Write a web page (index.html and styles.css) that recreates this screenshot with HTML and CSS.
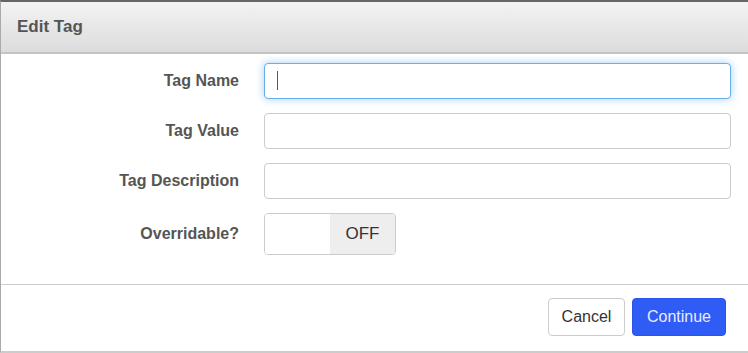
FILE: index.html
```html
<!DOCTYPE html>
<html lang="en">
<head>
  <meta charset="UTF-8" />
  <meta name="viewport" content="width=device-width, initial-scale=1.0"/>
  <title>Edit Tag</title>
  <link rel="stylesheet" href="styles.css">
</head>
<body>
  <div class="modal">
    <div class="modal-header">Edit Tag</div>

    <form class="modal-body">
      <div class="row">
        <label for="tagName">Tag Name</label>
        <div class="field">
          <input type="text" id="tagName" class="focused">
          <span class="caret"></span>
        </div>
      </div>
      <div class="row">
        <label for="tagValue">Tag Value</label>
        <div class="field"><input type="text" id="tagValue"></div>
      </div>
      <div class="row">
        <label for="tagDescription">Tag Description</label>
        <div class="field"><input type="text" id="tagDescription"></div>
      </div>
      <div class="row">
        <label>Overridable?</label>
        <div class="field">
          <div class="switch">
            <span class="switch-handle"></span>
            <span class="switch-off">OFF</span>
          </div>
        </div>
      </div>
    </form>

    <div class="modal-footer">
      <button class="btn btn-default">Cancel</button>
      <button class="btn btn-primary">Continue</button>
    </div>
  </div>
</body>
</html>
```

FILE: styles.css
```css
body {
  margin: 0;
  font-family: "Liberation Sans", Arial, sans-serif;
  font-size: 16px;
  color: #333;
  background-color: #fff;
}

.modal {
  border-top: 2px solid #666;
  border-left: 1px solid #aaa;
  border-bottom: 2px solid #ccc;
  height: 353px;
  box-sizing: border-box;
  display: flex;
  flex-direction: column;
}

.modal-header {
  height: 50px;
  padding-left: 16px;
  display: flex;
  align-items: center;
  font-size: 17px;
  font-weight: bold;
  color: #555;
  background: linear-gradient(to bottom, #f3f3f3, #dcdcdc);
  border-bottom: 2px solid #c4c4c4;
  flex-shrink: 0;
}

.modal-body {
  margin: 0;
  padding: 9px 17px 0 0;
  flex: 1;
}

.row {
  display: flex;
  align-items: center;
  margin-bottom: 14px;
}

.row:last-child {
  margin-bottom: 0;
}

.row label {
  flex: 0 0 263px;
  text-align: right;
  font-weight: bold;
  color: #555;
  padding-right: 25px;
  box-sizing: border-box;
}

.field {
  flex: 1;
  position: relative;
}

input[type="text"] {
  display: block;
  width: 100%;
  height: 36px;
  box-sizing: border-box;
  border: 1px solid #ccc;
  border-radius: 4px;
  padding: 6px 12px;
  font-family: inherit;
  font-size: 16px;
  color: #555;
  outline: none;
}

input.focused,
input[type="text"]:focus {
  border-color: #66afe9;
  box-shadow: 0 0 8px rgba(102, 175, 233, 0.6);
}

.caret {
  position: absolute;
  left: 13px;
  top: 8px;
  width: 1px;
  height: 19px;
  background-color: #555;
}

.switch {
  display: flex;
  width: 132px;
  height: 42px;
  box-sizing: border-box;
  border: 1px solid #ccc;
  border-radius: 4px;
  overflow: hidden;
}

.switch-handle {
  width: 65px;
  background-color: #fff;
}

.switch-off {
  flex: 1;
  display: flex;
  align-items: center;
  justify-content: center;
  background-color: #eee;
  color: #333;
  font-size: 17px;
}

.modal-footer {
  border-top: 1px solid #ccc;
  height: 67px;
  box-sizing: border-box;
  padding: 13px 22px 0 0;
  display: flex;
  justify-content: flex-end;
  gap: 7px;
  flex-shrink: 0;
}

.btn {
  height: 38px;
  padding: 0;
  border-radius: 4px;
  font-family: inherit;
  font-size: 16px;
  cursor: pointer;
}

.btn-default {
  width: 77px;
  background-color: #fff;
  border: 1px solid #ccc;
  color: #333;
}

.btn-primary {
  width: 94px;
  background-color: #2f5cf5;
  border: 1px solid #2a55e8;
  color: #e8ecff;
}
```
